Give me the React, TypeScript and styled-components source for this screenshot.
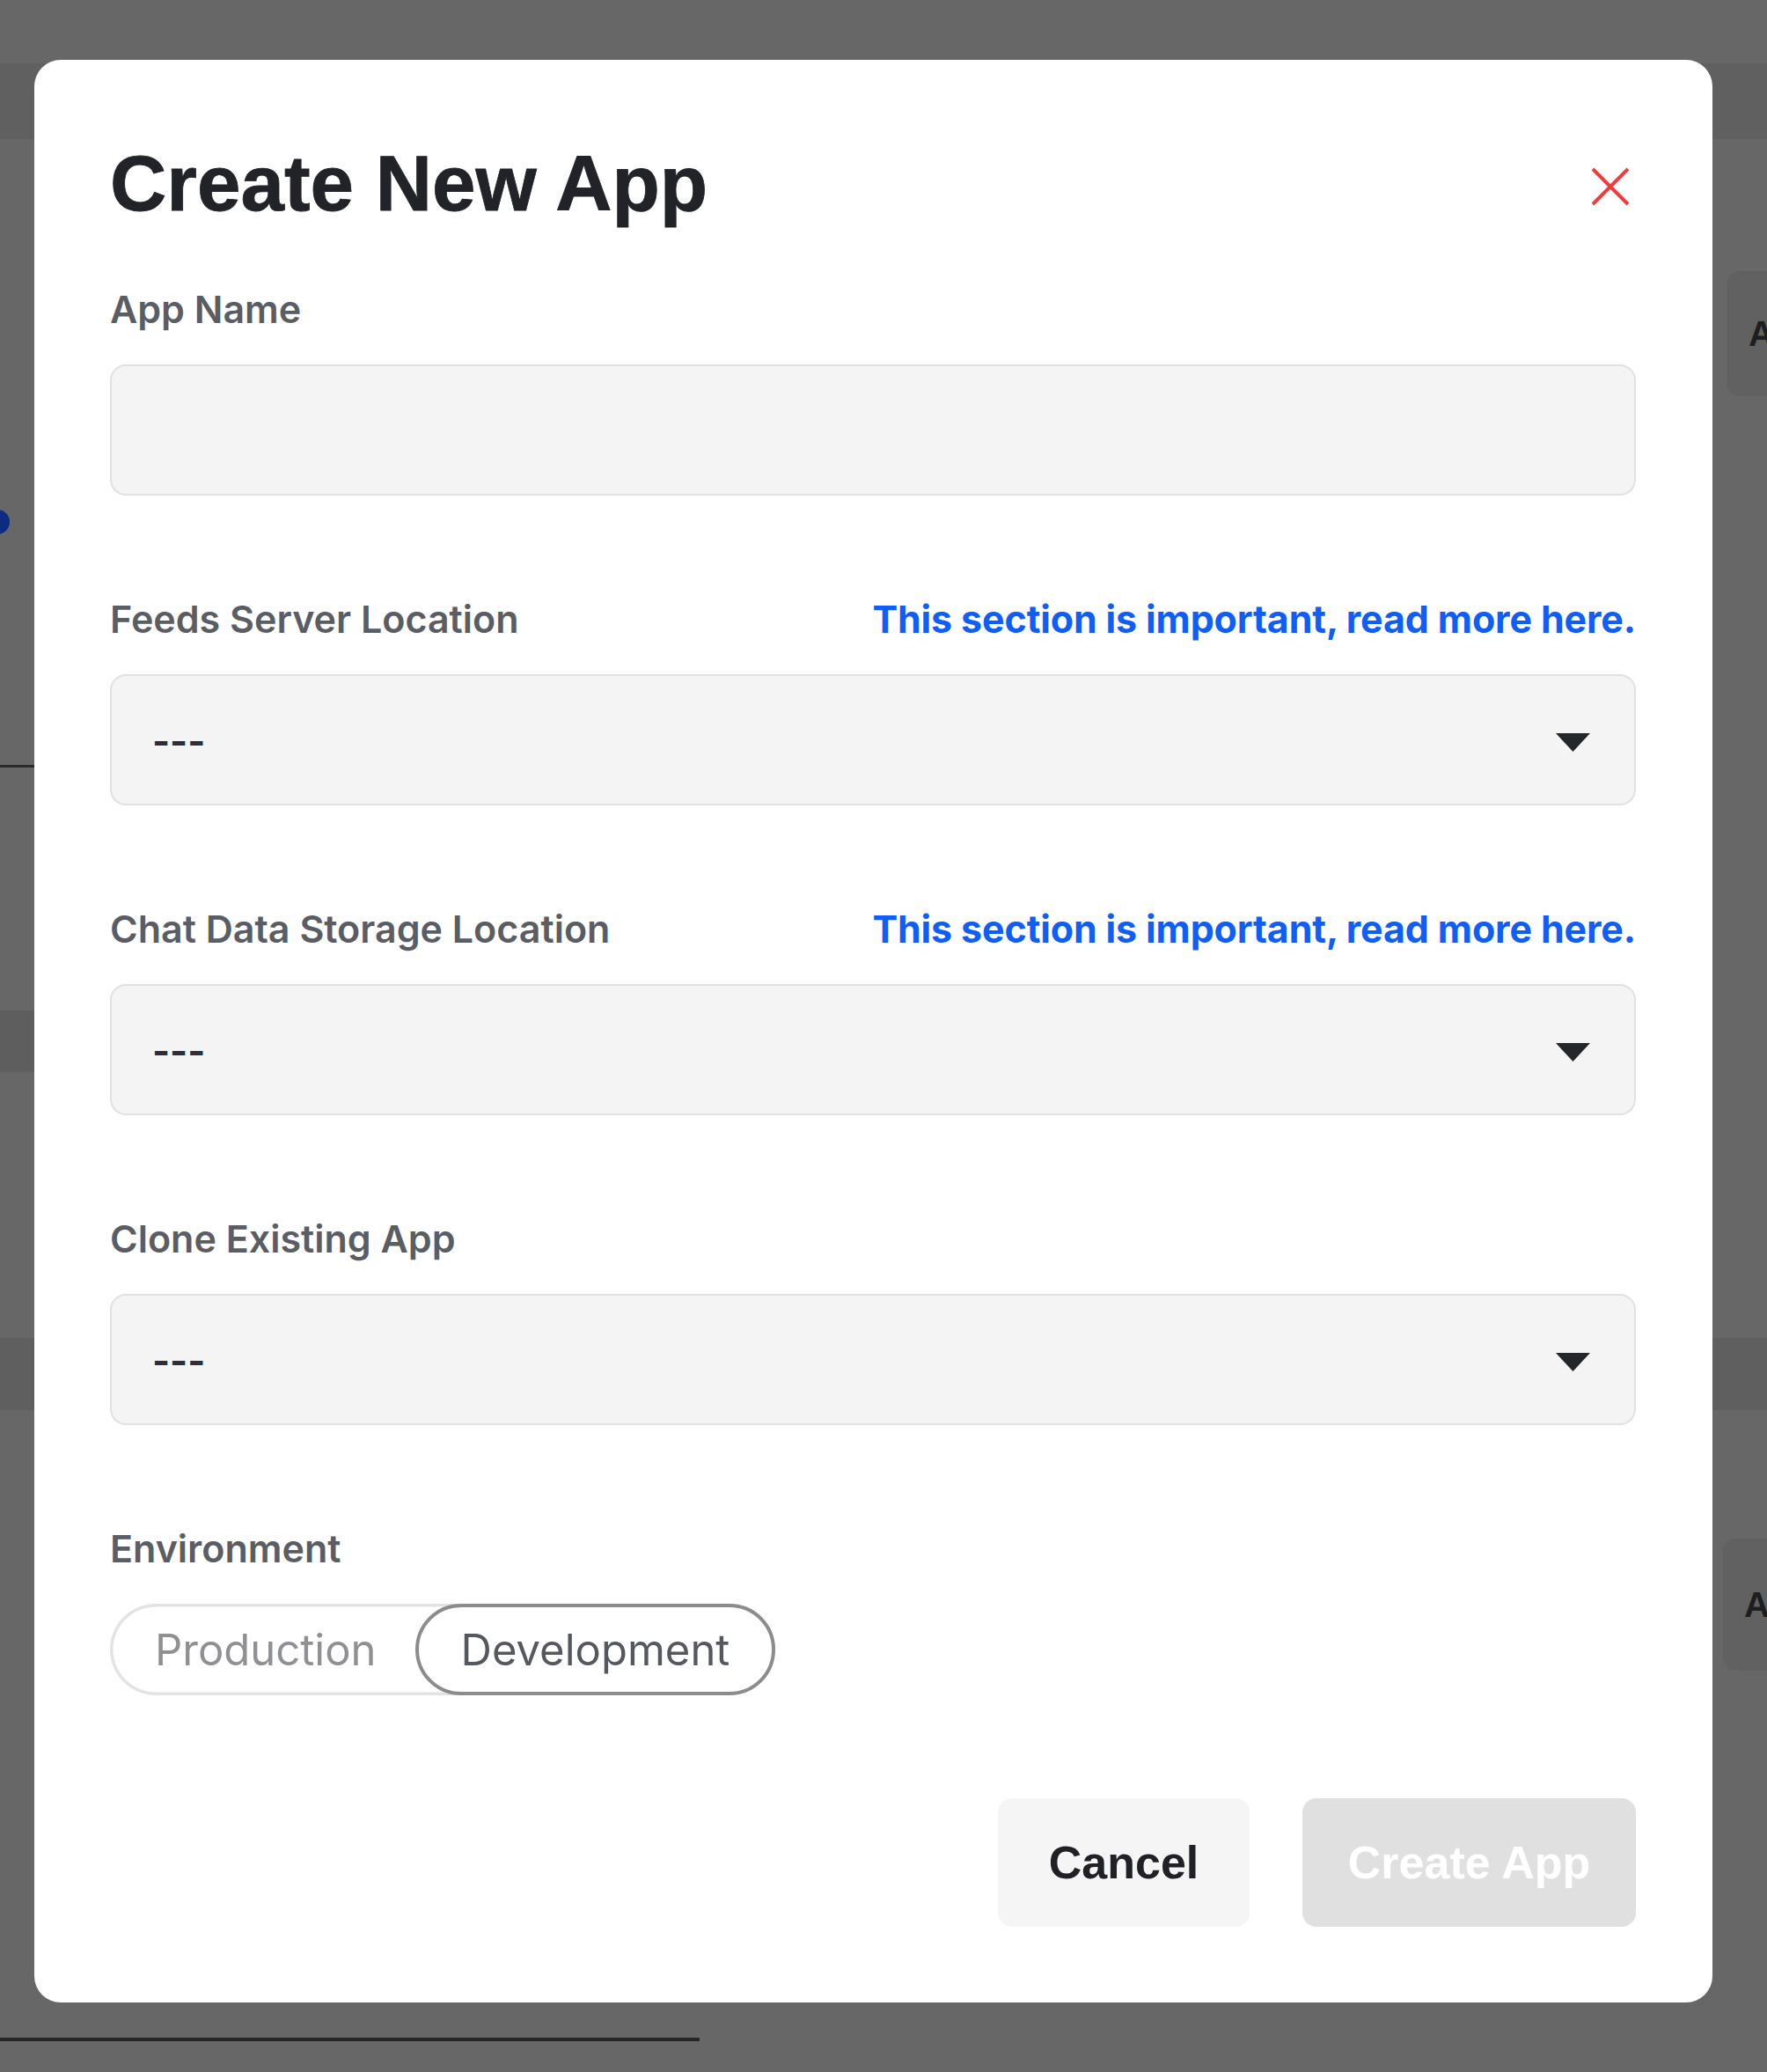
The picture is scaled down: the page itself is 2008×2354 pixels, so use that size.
import React from "react";
import styled, { createGlobalStyle } from "styled-components";

const GlobalStyle = createGlobalStyle`
  html, body { margin: 0; padding: 0; }
  body {
    width: 2008px;
    height: 2354px;
    overflow: hidden;
    background: #676767;
    font-family: Inter, "Liberation Sans", sans-serif;
  }
  * { box-sizing: border-box; }
`;

const Page = styled.div`
  position: relative;
  width: 2008px;
  height: 2354px;
  background: #676767;
  overflow: hidden;
`;

/* ---------- dimmed page behind the dialog ---------- */
const Backdrop = styled.div`
  display: flex;
  flex-direction: column;
  height: 100%;
`;

const Band = styled.div<{ $top: number; $h: number; $w?: number; $color?: string }>`
  margin-top: ${(p) => p.$top}px;
  height: ${(p) => p.$h}px;
  width: ${(p) => (p.$w ? `${p.$w}px` : "100%")};
  background: ${(p) => p.$color ?? "#606060"};
  flex-shrink: 0;
`;

const SideRow = styled.div<{ $top: number; $h: number }>`
  margin-top: ${(p) => p.$top}px;
  height: ${(p) => p.$h}px;
  display: flex;
  justify-content: flex-end;
  flex-shrink: 0;
`;

const SideTab = styled.div<{ $w: number }>`
  width: ${(p) => p.$w}px;
  height: 100%;
  background: #616161;
  border-radius: 14px 0 0 14px;
  display: flex;
  align-items: center;
  padding-left: 24px;
  overflow: hidden;
  font-family: "Liberation Sans", sans-serif;
  font-size: 40px;
  font-weight: 700;
  color: #1e1e1e;
  white-space: nowrap;
`;

const DotRow = styled.div`
  margin-top: 129px;
  height: 28px;
  flex-shrink: 0;
  display: flex;
`;

const Dot = styled.div`
  width: 28px;
  height: 28px;
  margin-left: -17px;
  border-radius: 50%;
  background: #0b2c80;
`;

/* ---------- dialog ---------- */
const Modal = styled.div`
  position: absolute;
  left: 39px;
  top: 68px;
  width: 1907px;
  height: 2207px;
  background: #ffffff;
  border-radius: 30px;
  padding: 86px 87px 87px 86px;
  display: flex;
  flex-direction: column;
`;

const Header = styled.div`
  display: flex;
  align-items: center;
  justify-content: space-between;
  height: 108px;
`;

const Title = styled.h1`
  margin: 0;
  font-family: "Liberation Sans", Arial, sans-serif;
  font-weight: 700;
  font-size: 89px;
  line-height: 108px;
  color: #222329;
  -webkit-text-stroke: 0.8px #222329;
`;

const CloseButton = styled.button`
  width: 46px;
  height: 46px;
  margin: 8px 6px 0 0;
  padding: 0;
  border: none;
  background: transparent;
  display: flex;
  cursor: pointer;
`;

const Field = styled.div<{ $top: number }>`
  margin-top: ${(p) => p.$top}px;
  display: flex;
  flex-direction: column;
  gap: 38px;
`;

const LabelRow = styled.div`
  height: 50px;
  display: flex;
  align-items: center;
  justify-content: space-between;
`;

const Label = styled.label`
  font-family: Inter, "Liberation Sans", sans-serif;
  font-size: 43px;
  font-weight: 600;
  line-height: 50px;
  color: #5a5d63;
`;

const InfoLink = styled.a`
  font-family: Inter, "Liberation Sans", sans-serif;
  font-size: 43px;
  font-weight: 700;
  line-height: 50px;
  color: #0f5ef7;
  text-decoration: none;
  letter-spacing: -0.15px;
`;

const TextInput = styled.input`
  height: 149px;
  width: 100%;
  background: #f4f4f4;
  border: 2px solid #e1e1e1;
  border-radius: 18px;
  padding: 0 48px;
  font-family: Inter, sans-serif;
  font-size: 43px;
  outline: none;
`;

const Select = styled.div`
  height: 149px;
  background: #f4f4f4;
  border: 2px solid #e1e1e1;
  border-radius: 18px;
  padding: 0 50px 0 46px;
  display: flex;
  align-items: center;
  justify-content: space-between;
  font-family: Inter, sans-serif;
  font-size: 43px;
  font-weight: 700;
  color: #2d2f34;
`;

const Caret = styled.svg`
  width: 39px;
  height: 21px;
  margin-top: 5px;
`;

const Toggle = styled.div`
  align-self: flex-start;
  display: inline-flex;
  height: 104px;
  border-radius: 999px;
  box-shadow: inset 0 0 0 3.5px #e3e3e3;
`;

const ToggleOption = styled.button<{ $active?: boolean }>`
  height: 104px;
  padding: 0 ${(p) => (p.$active ? "48px" : "40px")} 0 ${(p) => (p.$active ? "48px" : "47px")};
  border-radius: 999px;
  border: 4.5px solid ${(p) => (p.$active ? "#8b8c8f" : "transparent")};
  background: transparent;
  font-family: Inter, sans-serif;
  font-size: 49px;
  font-weight: 400;
  color: ${(p) => (p.$active ? "#55585e" : "#8e9094")};
  cursor: pointer;
`;

const Footer = styled.div`
  margin-top: 117px;
  display: flex;
  justify-content: flex-end;
  gap: 60px;
`;

const Button = styled.button<{ $primary?: boolean }>`
  height: 146px;
  width: ${(p) => (p.$primary ? "379px" : "286px")};
  border: none;
  border-radius: 16px;
  background: ${(p) => (p.$primary ? "#e0e0e0" : "#f5f5f5")};
  color: ${(p) => (p.$primary ? "#ffffff" : "#202126")};
  font-family: "Liberation Sans", Arial, sans-serif;
  font-weight: 700;
  font-size: 52px;
  cursor: pointer;
`;

const CaretIcon = () => (
  <Caret viewBox="0 0 39 21">
    <polygon points="0,0 39,0 19.5,21" fill="#23272b" />
  </Caret>
);

const SelectField = ({ label, link, top }: { label: string; link?: boolean; top: number }) => (
  <Field $top={top}>
    <LabelRow>
      <Label>{label}</Label>
      {link && <InfoLink href="#">This section is important, read more here.</InfoLink>}
    </LabelRow>
    <Select>
      <span>---</span>
      <CaretIcon />
    </Select>
  </Field>
);

export default function App() {
  return (
    <>
      <GlobalStyle />
      <Page>
        <Backdrop>
          <Band $top={72} $h={86} />
          <SideRow $top={150} $h={142}>
            <SideTab $w={45}>A</SideTab>
          </SideRow>
          <DotRow>
            <Dot />
          </DotRow>
          <Band $top={262} $h={3} $w={40} $color="#2b2b2b" />
          <Band $top={276} $h={70} $w={40} $color="#5e5e5e" />
          <Band $top={302} $h={82} $color="#5f5f5f" />
          <SideRow $top={146} $h={150}>
            <SideTab $w={50}>A</SideTab>
          </SideRow>
          <Band $top={417} $h={4} $w={795} $color="#262626" />
        </Backdrop>

        <Modal>
          <Header>
            <Title>Create New App</Title>
            <CloseButton aria-label="Close">
              <svg width="46" height="46" viewBox="0 0 46 46">
                <path d="M3 3 L43 43 M43 3 L3 43" stroke="#ef3d3d" strokeWidth="4" strokeLinecap="butt" />
              </svg>
            </CloseButton>
          </Header>

          <Field $top={64}>
            <LabelRow>
              <Label>App Name</Label>
            </LabelRow>
            <TextInput />
          </Field>

          <SelectField label="Feeds Server Location" link top={115} />
          <SelectField label="Chat Data Storage Location" link top={115} />
          <SelectField label="Clone Existing App" top={115} />

          <Field $top={115}>
            <LabelRow>
              <Label>Environment</Label>
            </LabelRow>
            <Toggle>
              <ToggleOption>Production</ToggleOption>
              <ToggleOption $active>Development</ToggleOption>
            </Toggle>
          </Field>

          <Footer>
            <Button>Cancel</Button>
            <Button $primary>Create App</Button>
          </Footer>
        </Modal>
      </Page>
    </>
  );
}
